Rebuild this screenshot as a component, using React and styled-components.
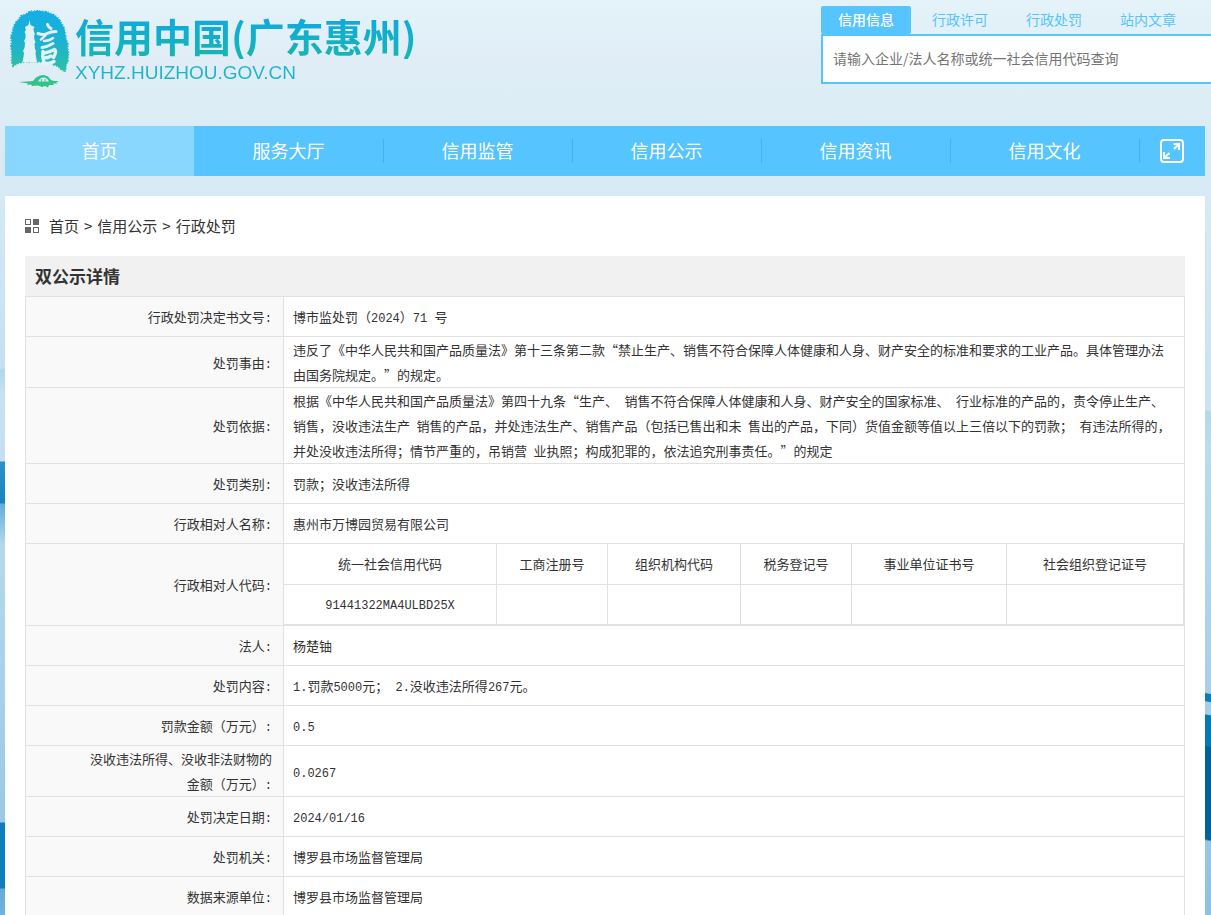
import React from "react";
import styled, { createGlobalStyle } from "styled-components";

const TABS = ["信用信息", "行政许可", "行政处罚", "站内文章"];
const NAV = ["首页", "服务大厅", "信用监管", "信用公示", "信用资讯", "信用文化"];

const CODES = [
  { label: "统一社会信用代码", value: "91441322MA4ULBD25X", width: 213 },
  { label: "工商注册号", value: "", width: 111 },
  { label: "组织机构代码", value: "", width: 133 },
  { label: "税务登记号", value: "", width: 111 },
  { label: "事业单位证书号", value: "", width: 155 },
  { label: "社会组织登记证号", value: "", width: 177 },
];

const ROWS = [
  ["行政处罚决定书文号:", "博市监处罚（2024）71 号"],
  [
    "处罚事由:",
    "违反了《中华人民共和国产品质量法》第十三条第二款“禁止生产、销售不符合保障人体健康和人身、财产安全的标准和要求的工业产品。具体管理办法由国务院规定。”的规定。",
  ],
  [
    "处罚依据:",
    "根据《中华人民共和国产品质量法》第四十九条“生产、\u2002销售不符合保障人体健康和人身、财产安全的国家标准、\u2002行业标准的产品的，责令停止生产、销售，没收违法生产\u2002销售的产品，并处违法生产、销售产品（包括已售出和未\u2002售出的产品，下同）货值金额等值以上三倍以下的罚款；\u2002有违法所得的，并处没收违法所得；情节严重的，吊销营\u2002业执照；构成犯罪的，依法追究刑事责任。”的规定",
  ],
  ["处罚类别:", "罚款；没收违法所得"],
  ["行政相对人名称:", "惠州市万博园贸易有限公司"],
  ["行政相对人代码:", CODES],
  ["法人:", "杨楚铀"],
  ["处罚内容:", "1.罚款5000元； 2.没收违法所得267元。"],
  ["罚款金额（万元）:", "0.5"],
  ["没收违法所得、没收非法财物的金额（万元）:", "0.0267"],
  ["处罚决定日期:", "2024/01/16"],
  ["处罚机关:", "博罗县市场监督管理局"],
  ["数据来源单位:", "博罗县市场监督管理局"],
];

// Latin runs are set in a half-width face, everything else stays full width
const Text = ({ children }) =>
  children
    .split(/([\x20-\x7e]+)/)
    .map((part, i) => (i % 2 ? <Half key={i}>{part}</Half> : part));

const LogoMark = () => (
  <svg width="62" height="80" viewBox="9 9 62 80" aria-hidden="true">
    <defs>
      <linearGradient id="seal" x1="0" y1="9" x2="0" y2="88" gradientUnits="userSpaceOnUse">
        <stop offset="0" stopColor="#12aee8" />
        <stop offset="0.4" stopColor="#1cb2d2" />
        <stop offset="0.75" stopColor="#2abfa8" />
        <stop offset="1" stopColor="#34c47c" />
      </linearGradient>
    </defs>
    <path
      fill="url(#seal)"
      stroke="url(#seal)"
      strokeWidth="2"
      strokeDasharray="1 1.400 2 1 1 2"
      d="M13 66L11.500 60 12 54 11 48 11.500 42 11 36 13 30 14 25 18 20 21 16 26 14 30 11.500 36 11 41 11 47 12 52 14 57 17 60 21 63 26 65 31 65.500 37 67.500 43 68 50 68.500 56 67.500 62 66 66 65 72 61 69 57 66 51 63.500 43 62 35 61.500 27 61.500 20 62.500z"
    />
    <path
      fill="#e3f1f9"
      d="M29.500 20L30.500 25 34.500 27 33.500 29 34 32 35 34 34 36 34.500 40 35.500 42 34.500 44 35 49 36 51 35.500 53 36 57 37 62 22.500 62 23.500 57 24 53 23 51 24.500 48 25 43 24 41 25.500 38 25.500 34 24.500 32 26 30 25 27 28.500 25z"
    />
    <g fill="none" stroke="#e3f1f9" strokeLinecap="round" strokeLinejoin="round">
      <path strokeWidth="3" d="M47.500 24.500Q48.500 27.500 51 28.500" />
      <path strokeWidth="3" d="M38 33.500Q43 35.500 47 33.500T56 31.500" />
      <path strokeWidth="2.600" d="M46 34.500Q43 38 41 39.500M44 41Q49 41 53 38" />
      <path strokeWidth="3" d="M42 47.500Q47 47 53 43.500" />
      <path strokeWidth="3.400" d="M43 51.500Q42 57 44 62.500M43 53.500Q50 52 54.500 49.500 57 51 53.500 57.500M44 58Q48 58 51 56M44 63Q49 64.500 54 61.500" />
    </g>
    <path
      fill="url(#seal)"
      fillRule="evenodd"
      d="M19 82L27 81.500 33 81 36 77.500 40 75.500 44 75 48 76.500 51 80 54 81 59 81 56 82.500 58 83.500 53 83.500 54 85 49 85 48 87.500 45 86 42 87 38 85.500 32 86 31 84.500 27 85 28 83.500zM38 81.500L49 81.500Q47 77.500 43.500 77.500 40 77.500 38 81.500z"
    />
    <path stroke="#34c47c" strokeWidth="1" d="M41.500 79v2.500M45 79v2.500" />
  </svg>
);

const GridIcon = () => (
  <svg width="14" height="14" viewBox="0 0 14 14" aria-hidden="true" shapeRendering="crispEdges">
    <path fill="none" stroke="#666" d="M.5.5h5v5h-5zM8.500 8.500h5v5h-5z" />
    <path fill="#666" d="M8 0h6v6H8zM0 8h6v6H0z" />
  </svg>
);

const ExpandIcon = () => (
  <svg width="24" height="24" viewBox="0 0 24 24" fill="none" stroke="#fff" aria-hidden="true">
    <rect x="1" y="1" width="22" height="22" rx="3" strokeWidth="2" />
    <path strokeWidth="2" d="M13.500 5H20M19 4v7M19 5l-5 5M4 13v7M3 19h7M4.500 18.500l5-4.500" />
  </svg>
);

const App = () => (
  <>
    <GlobalStyle />
    <Page>
      <Header>
        <Brand href="#">
          <LogoMark />
          <BrandText>
            <BrandName>信用中国(广东惠州)</BrandName>
            <BrandUrl>XYHZ.HUIZHOU.GOV.CN</BrandUrl>
          </BrandText>
        </Brand>
        <Search>
          <Tabs>
            {TABS.map((tab, i) => (
              <Tab key={tab} type="button" $active={i === 0}>{tab}</Tab>
            ))}
          </Tabs>
          <SearchInput
            aria-label="企业查询"
            placeholder="请输入企业/法人名称或统一社会信用代码查询"
          />
        </Search>
      </Header>

      <Container>
        <Nav>
          {NAV.map((item, i) => (
            <NavItem key={item} href="#" $active={i === 0} $divided={i > 1}>{item}</NavItem>
          ))}
          <ExpandButton type="button" aria-label="展开"><ExpandIcon /></ExpandButton>
        </Nav>

        <Panel>
          <Breadcrumb>
            <GridIcon />
            <Crumbs>
              <Crumb href="#">首页</Crumb>
              <span>&gt;</span>
              <Crumb href="#">信用公示</Crumb>
              <span>&gt;</span>
              <Crumb href="#">行政处罚</Crumb>
            </Crumbs>
          </Breadcrumb>

          <Title>双公示详情</Title>
          <DetailTable>
            <tbody>
              {ROWS.map(([label, value]) => (
                <tr key={label}>
                  <Label scope="row"><Text>{label}</Text></Label>
                  {Array.isArray(value) ? (
                    <Value $flush>
                      <CodeTable>
                        <thead>
                          <tr>
                            {value.map((code) => (
                              <CodeHead key={code.label} scope="col" $width={code.width}>
                                {code.label}
                              </CodeHead>
                            ))}
                          </tr>
                        </thead>
                        <tbody>
                          <tr>
                            {value.map((code) => (
                              <CodeCell key={code.label}><Text>{code.value}</Text></CodeCell>
                            ))}
                          </tr>
                        </tbody>
                      </CodeTable>
                    </Value>
                  ) : (
                    <Value><Text>{value}</Text></Value>
                  )}
                </tr>
              ))}
            </tbody>
          </DetailTable>
        </Panel>
      </Container>
    </Page>
  </>
);

export default App;

// Styled Components
const GlobalStyle = createGlobalStyle`
  * {
    box-sizing: border-box;
  }

  body {
    margin: 0;
    color: #333;
    font-family: "Noto Sans CJK SC", sans-serif;
  }

  a {
    color: inherit;
    text-decoration: none;
  }

  button, input {
    font-family: inherit;
  }
`;

// The two narrow strips are the ends of the waves that run behind the panel
const Page = styled.div`
  height: 100vh;
  overflow: hidden auto;
  scrollbar-width: none;
  background:
    linear-gradient(
      #d6e8f4 0, #c5e0f1 172px, #b2d6ec 174px, #c8e2f2 200px, #c6def1 265px,
      #2a92c9 266px, #1684bf 307px, #64add8 308px, #b5d9ec 350px, #9bc8e8 626px,
      #0b7ebb 627px, #0b7ebb 692px, #62abd8 693px, #72b4dd 720px
    ) left 196px / 5px 719px no-repeat,
    linear-gradient(
      190deg,
      #d6eaf4 0, #c9e3f2 211px, #b3d7ec 213px, #b9dcef 246px, #a8cfea 490px,
      #0d7db9 491px, #0d7db9 498px, #a5cdea 499px, #a8cfea 511px, #0379b6 512px,
      #0379b6 542px, #026198 543px, #026198 634px, #98c7e4 636px, #8cc1df 709px
    ) right 196px / 6px 719px no-repeat,
    linear-gradient(#e4f3fa 0, #e0edf7 60px, #dcedf5 110px, #d9e9f5 180px, #d6eaf4 200px);
`;

const Header = styled.header`
  height: 126px;
  display: flex;
  justify-content: space-between;
  align-items: flex-start;
`;

const Brand = styled.a`
  display: flex;
  gap: 4px;
  padding: 9px 0 0 9px;
`;

const BrandText = styled.div`
  display: flex;
  flex-direction: column;
  padding-top: 2px;
  color: transparent;
`;

const BrandName = styled.span`
  font-size: 39px;
  font-weight: 700;
  line-height: 48px;
  white-space: nowrap;
  background: linear-gradient(#0ea9e4 10%, #16b5b4 90%);
  background-clip: text;
`;

const BrandUrl = styled.span`
  font-family: "Liberation Sans", sans-serif;
  font-size: 19px;
  line-height: 28px;
  background: linear-gradient(#2ab4dc, #14b3b8);
  background-clip: text;
`;

const Search = styled.div`
  flex: 0 0 390px;
  padding-top: 6px;
`;

const Tabs = styled.div`
  display: flex;
  gap: 4px;
`;

const Tab = styled.button`
  width: 90px;
  height: 28px;
  padding: 0 0 2px;
  border: none;
  border-radius: 2px;
  font-size: 14px;
  font-weight: ${(props) => (props.$active ? 500 : 400)};
  color: ${(props) => (props.$active ? "#fff" : "#55c4ff")};
  background: ${(props) => (props.$active ? "#55c4ff" : "transparent")};
  cursor: pointer;
`;

const SearchInput = styled.input`
  display: block;
  width: 100%;
  height: 50px;
  padding: 0 10px 2px;
  border: 2px solid #55c4ff;
  border-right: none;
  font-size: 14px;
  background: #fff;
  outline: none;

  &::placeholder {
    color: #757575;
  }
`;

const Container = styled.div`
  padding: 0 6px 0 5px;
`;

const Nav = styled.nav`
  display: flex;
  height: 50px;
  background: #55c4ff;
`;

const divider = "linear-gradient(#41b4f0, #41b4f0) left center / 1px 24px no-repeat";

const NavItem = styled.a`
  flex: 1;
  display: flex;
  align-items: center;
  justify-content: center;
  padding-bottom: 2px;
  font-size: 18px;
  color: #fff;
  background: ${(props) => (props.$active ? "#89d6ff" : props.$divided ? divider : "none")};
`;

const ExpandButton = styled.button`
  flex: 0 0 66px;
  display: flex;
  align-items: center;
  justify-content: center;
  padding: 0;
  border: none;
  background: ${divider};
  cursor: pointer;
`;

const Panel = styled.main`
  margin-top: 20px;
  padding: 0 20px;
  background: #fff;
`;

const Breadcrumb = styled.div`
  display: flex;
  align-items: center;
  gap: 10px;
  height: 60px;
  font-size: 15px;
`;

const Crumbs = styled.div`
  display: flex;
  gap: 5px;
  padding-bottom: 2px;
`;

const Crumb = styled.a`
  color: #333;
`;

const Title = styled.h1`
  margin: 0;
  padding: 0 10px;
  font-size: 17px;
  font-weight: 700;
  line-height: 40px;
  background: #f1f1f1;
`;

const DetailTable = styled.table`
  width: 100%;
  border: solid #e1e1e1;
  border-width: 1px 0 0 1px;
  border-spacing: 0;
  font-size: 13px;
  line-height: 25px;
  text-spacing-trim: space-all;
`;

const Label = styled.th`
  width: 258px;
  height: 40px;
  padding: 0 11px 0 60px;
  border: solid #e1e1e1;
  border-width: 0 1px 1px 0;
  font-weight: 400;
  text-align: right;
  background: #f9f9f9;
`;

const Value = styled.td`
  padding: ${(props) => (props.$flush ? "0" : "0 9px")};
  border: solid #e1e1e1;
  border-width: 0 1px 1px 0;
`;

const Half = styled.span`
  font-family: "Liberation Mono", monospace;
  font-size: 12px;
  line-height: 1;
`;

const CodeTable = styled.table`
  width: 100%;
  table-layout: fixed;
  border-spacing: 0;
  text-align: center;
`;

const CodeHead = styled.th`
  width: ${(props) => props.$width}px;
  height: 41px;
  padding: 0 0 2px;
  border: solid #e1e1e1;
  border-width: 0 1px 1px 0;
  font-weight: 400;
`;

const CodeCell = styled.td`
  height: 40px;
  padding: 0 0 2px;
  border: solid #e1e1e1;
  border-width: 0 1px 1px 0;
`;
